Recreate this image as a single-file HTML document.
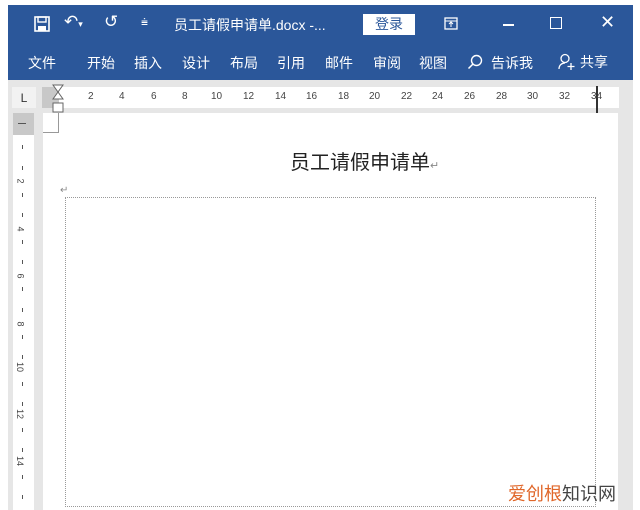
<!DOCTYPE html><html><head><meta charset="utf-8"><style>
*{margin:0;padding:0;box-sizing:border-box}
body{width:640px;height:510px;background:#fff;position:relative;overflow:hidden;font-family:"Liberation Sans","Noto Sans CJK SC",sans-serif}
.a{position:absolute}
.blue{left:8px;top:5px;width:625px;height:76px;background:#2b579a}
.t{color:#fff;font-size:14px;position:absolute;white-space:nowrap}
.m{color:#fff;font-size:14px;position:absolute;top:53px}
.rn{position:absolute;top:91px;font-size:10px;color:#444}
.vn{position:absolute;left:18px;font-size:9px;color:#444;transform:rotate(90deg)}
.vt{position:absolute;left:22px;width:1px;height:4px;background:#555}
</style></head><body>
<div class="a blue"></div>
<div class="a" style="left:8px;top:80px;width:625px;height:430px;background:#e6e6e6"></div>
<svg class="a" style="left:34px;top:16px" width="16" height="16"><rect x="1" y="1" width="14" height="14" fill="none" stroke="#fff" stroke-width="1.6"/><rect x="4" y="1" width="8" height="5" fill="none" stroke="#fff" stroke-width="1.4"/><rect x="4" y="10" width="8" height="5" fill="#fff"/></svg>
<div class="t" style="left:64px;top:12px;font-size:17px">↶<span style="font-size:9px">▾</span></div>
<div class="t" style="left:104px;top:12px;font-size:17px">↺</div>
<div class="t" style="left:141px;top:15px;font-size:12px">⩧</div>
<div class="t" style="left:174px;top:15px">员工请假申请单.docx -...</div>
<div class="a" style="left:363px;top:14px;width:52px;height:21px;background:#fff;color:#2b579a;font-size:14px;text-align:center;line-height:21px">登录</div>
<svg class="a" style="left:444px;top:17px" width="14" height="13"><rect x="1" y="1" width="12" height="11" fill="none" stroke="#fff" stroke-width="1.3"/><line x1="1" y1="4" x2="13" y2="4" stroke="#fff"/><path d="M7 5v5M5 7l2-2 2 2" stroke="#fff" fill="none"/></svg>
<div class="a" style="left:503px;top:24px;width:11px;height:1.5px;background:#fff"></div>
<div class="a" style="left:550px;top:17px;width:12px;height:12px;border:1.4px solid #fff"></div>
<div class="t" style="left:600px;top:12px;font-size:18px">✕</div>
<div class="m" style="left:28px">文件</div>
<div class="m" style="left:87px">开始</div>
<div class="m" style="left:134px">插入</div>
<div class="m" style="left:182px">设计</div>
<div class="m" style="left:230px">布局</div>
<div class="m" style="left:277px">引用</div>
<div class="m" style="left:325px">邮件</div>
<div class="m" style="left:373px">审阅</div>
<div class="m" style="left:419px">视图</div>
<svg class="a" style="left:467px;top:54px" width="16" height="16"><circle cx="9.5" cy="6.5" r="5" fill="none" stroke="#fff" stroke-width="1.4"/><line x1="6" y1="10" x2="1.5" y2="14.5" stroke="#fff" stroke-width="1.5"/></svg>
<div class="m" style="left:491px">告诉我</div>
<svg class="a" style="left:558px;top:53px" width="18" height="18"><circle cx="7" cy="5.5" r="4" fill="none" stroke="#fff" stroke-width="1.3"/><path d="M1 16c0-4 3-6 6-6" fill="none" stroke="#fff" stroke-width="1.3"/><path d="M13 10v7M9.5 13.5h7" stroke="#fff" stroke-width="1.3"/></svg>
<div class="m" style="left:580px;top:52px">共享</div>
<div class="a" style="left:12px;top:87px;width:24px;height:21px;background:#f2f2f2;color:#333;font-size:12px;text-align:center;line-height:22px">L</div>
<div class="a" style="left:42px;top:87px;width:577px;height:21px;background:#fff"></div>
<div class="a" style="left:42px;top:87px;width:17px;height:21px;background:#c8c8c8"></div>
<svg class="a" style="left:52px;top:84px" width="14" height="30"><path d="M1 1h10L6 8z M6 8l-5 7h10z" fill="#fff" stroke="#666"/><rect x="1" y="19" width="10" height="9" fill="#fff" stroke="#666"/></svg>
<div class="a" style="left:596px;top:86px;width:1.5px;height:27px;background:#333"></div>
<div class="rn" style="left:88px">2</div><div class="rn" style="left:119px">4</div><div class="rn" style="left:151px">6</div><div class="rn" style="left:182px">8</div><div class="rn" style="left:211px">10</div><div class="rn" style="left:243px">12</div><div class="rn" style="left:275px">14</div><div class="rn" style="left:306px">16</div><div class="rn" style="left:338px">18</div><div class="rn" style="left:369px">20</div><div class="rn" style="left:401px">22</div><div class="rn" style="left:432px">24</div><div class="rn" style="left:464px">26</div><div class="rn" style="left:496px">28</div><div class="rn" style="left:527px">30</div><div class="rn" style="left:559px">32</div><div class="rn" style="left:591px">34</div>
<div class="a" style="left:13px;top:113px;width:21px;height:397px;background:#fff"></div>
<div class="a" style="left:13px;top:113px;width:21px;height:22px;background:#c8c8c8"></div>
<div class="a" style="left:18px;top:123px;width:8px;height:1px;background:#555"></div>
<div class="vt" style="top:145px"></div><div class="vt" style="top:166px"></div><div class="vt" style="top:193px"></div><div class="vt" style="top:213px"></div><div class="vt" style="top:240px"></div><div class="vt" style="top:260px"></div><div class="vt" style="top:287px"></div><div class="vt" style="top:308px"></div><div class="vt" style="top:335px"></div><div class="vt" style="top:355px"></div><div class="vt" style="top:382px"></div><div class="vt" style="top:402px"></div><div class="vt" style="top:428px"></div><div class="vt" style="top:448px"></div><div class="vt" style="top:475px"></div><div class="vt" style="top:495px"></div>
<div class="vn" style="top:176px">2</div><div class="vn" style="top:224px">4</div><div class="vn" style="top:271px">6</div><div class="vn" style="top:319px">8</div><div class="vn" style="top:362px;left:15px">10</div><div class="vn" style="top:409px;left:15px">12</div><div class="vn" style="top:456px;left:15px">14</div>
<div class="a" style="left:43px;top:113px;width:575px;height:397px;background:#fff"></div>
<div class="a" style="left:43px;top:113px;width:16px;height:20px;border-right:1px solid #999;border-bottom:1px solid #999"></div>
<div class="a" style="left:290px;top:146px;font-size:20px;color:#222">员工请假申请单<span style="font-size:11px;color:#888">↵</span></div>
<div class="a" style="left:60px;top:185px;font-size:10px;color:#888">↵</div>
<div class="a" style="left:65px;top:197px;width:531px;height:310px;border:1px dotted #999"></div>
<div class="a" style="left:508px;top:480px;font-size:18px;color:#e0672a">爱创根<span style="color:#444">知识网</span></div>
</body></html>
